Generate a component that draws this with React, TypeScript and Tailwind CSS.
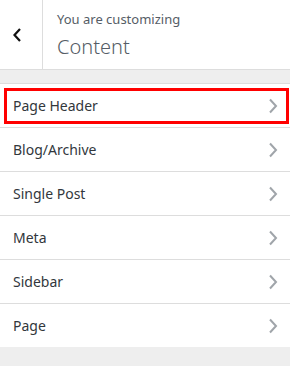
const sections = ["Page Header", "Blog/Archive", "Single Post", "Meta", "Sidebar", "Page"];

export default function App() {
	return (
		<div className="w-[290px] h-[366px] bg-[#eeeeee] overflow-hidden font-['Noto_Sans',sans-serif]">
			<div className="flex h-[70px] bg-white border-b border-[#dddddd]">
				<button className="w-[43px] h-full flex items-center pl-[12px] border-r border-[#dddddd]">
					<svg width="10" height="14" viewBox="0 0 10 14">
						<path d="M8 1 L2.5 7 L8 13" fill="none" stroke="#111" strokeWidth="2.2" />
					</svg>
				</button>
				<div className="flex flex-col pl-[14px] pt-[10px]">
					<span className="text-[13px] leading-[18px] text-[#555d66]">You are customizing</span>
					<span className="text-[20px] leading-[28px] mt-[5px] font-light text-[#555d66]">Content</span>
				</div>
			</div>

			<ul className="mt-[13px]">
				{sections.map((s, i) => (
					<li key={s} className="bg-white border-t border-[#dddddd] h-[44px] relative">
						<div className="flex items-center justify-between h-full pl-[13px] pr-[12px]">
							<span className="text-[14px] text-[#32373c]">{s}</span>
							<svg width="10" height="16" viewBox="0 0 10 16">
								<path d="M2 1.5 L8 8 L2 14.5" fill="none" stroke="#a0a5aa" strokeWidth="2" />
							</svg>
						</div>
						{i === 0 && (
							<div className="absolute left-[4px] right-[1px] top-[4px] bottom-[3px] border-[3px] border-[#ff0000]" />
						)}
					</li>
				))}
			</ul>
		</div>
	);
}
